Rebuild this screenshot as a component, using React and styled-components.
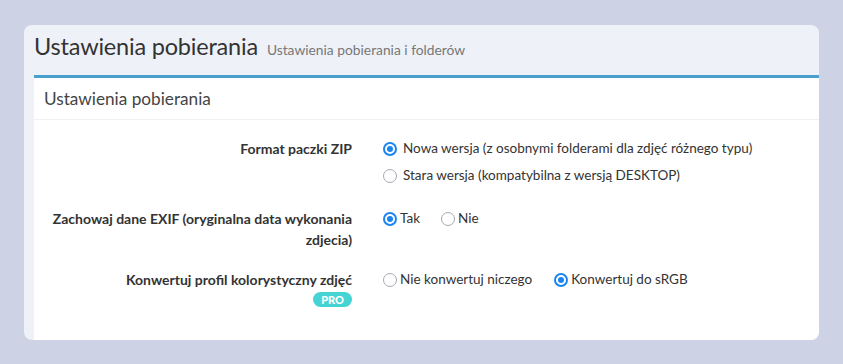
import React from "react";
import styled, { createGlobalStyle } from "styled-components";

const Global = createGlobalStyle`
  html, body { margin: 0; padding: 0; }
  body {
    background: #cdd3e5;
    font-family: "Lato", "Liberation Sans", sans-serif;
    color: #333;
  }
`;

const Page = styled.div`
  padding: 25px 24px 26px 24px;
`;

const Card = styled.div`
  background: #eef2f8;
  border-radius: 8px;
  overflow: hidden;
  padding-left: 10px;
`;

const Header = styled.div`
  display: flex;
  align-items: baseline;
  gap: 9px;
  height: 50px;
  padding-top: 7px;
  box-sizing: border-box;
`;

const Title = styled.h1`
  margin: 0;
  font-size: 23.5px;
  font-weight: 400;
  color: #333;
  letter-spacing: -0.2px;
`;

const Subtitle = styled.span`
  font-size: 13.8px;
  color: #777;
`;

const Panel = styled.div`
  background: #fff;
  border-top: 3px solid #4aa0cd;
`;

const PanelHeading = styled.div`
  height: 41px;
  display: flex;
  align-items: center;
  padding-left: 10px;
  font-size: 17.2px;
  color: #444;
  border-bottom: 1px solid #eef0f3;
`;

const Form = styled.div`
  padding: 18px 0 33px;
  display: flex;
  flex-direction: column;
  gap: 19px;
`;

const Row = styled.div`
  display: grid;
  grid-template-columns: 318px 1fr;
  column-gap: 31px;
  align-items: start;
`;

const Label = styled.div`
  text-align: right;
  font-weight: 700;
  font-size: 14px;
  line-height: 21px;
  color: #333;
  display: flex;
  flex-direction: column;
  align-items: flex-end;
`;

const Badge = styled.span`
  display: inline-block;
  margin-top: 2px;
  background: #46d3d3;
  color: #fff;
  font-size: 11px;
  font-weight: 900;
  height: 15px;
  line-height: 15px;
  padding: 0 8px;
  border-radius: 8px;
`;

const Options = styled.div`
  display: flex;
  flex-direction: ${(p) => (p.$stacked ? "column" : "row")};
  gap: ${(p) => p.$gap}px;
  margin-top: ${(p) => (p.$stacked ? -3 : 0)}px;
`;

const Option = styled.label`
  display: flex;
  align-items: center;
  gap: ${(p) => p.$gap}px;
  font-size: 13.5px;
  line-height: ${(p) => (p.$tall ? 27 : 21)}px;
  color: #333;
`;

const Radio = styled.span`
  width: 14px;
  height: 14px;
  box-sizing: border-box;
  border-radius: 50%;
  flex: none;
  border: ${(p) => (p.$on ? "2px solid #1a84f2" : "1.5px solid #a7a6b6")};
  display: flex;
  align-items: center;
  justify-content: center;
  &::after {
    content: "";
    width: 6px;
    height: 6px;
    border-radius: 50%;
    background: ${(p) => (p.$on ? "#1a84f2" : "transparent")};
  }
`;

export default function App() {
  return (
    <>
      <Global />
      <Page>
        <Card>
          <Header>
            <Title>Ustawienia pobierania</Title>
            <Subtitle>Ustawienia pobierania i folderów</Subtitle>
          </Header>
          <Panel>
            <PanelHeading>Ustawienia pobierania</PanelHeading>
            <Form>
              <Row>
                <Label>Format paczki ZIP</Label>
                <Options $stacked $gap={0}>
                  <Option $gap={6} $tall>
                    <Radio $on />
                    Nowa wersja (z osobnymi folderami dla zdjęć różnego typu)
                  </Option>
                  <Option $gap={6} $tall>
                    <Radio />
                    Stara wersja (kompatybilna z wersją DESKTOP)
                  </Option>
                </Options>
              </Row>
              <Row>
                <Label>
                  Zachowaj dane EXIF (oryginalna data wykonania
                  <br />
                  zdjecia)
                </Label>
                <Options $gap={21}>
                  <Option $gap={3}>
                    <Radio $on />
                    Tak
                  </Option>
                  <Option $gap={3}>
                    <Radio />
                    Nie
                  </Option>
                </Options>
              </Row>
              <Row>
                <Label>
                  Konwertuj profil kolorystyczny zdjęć
                  <Badge>PRO</Badge>
                </Label>
                <Options $gap={22}>
                  <Option $gap={3}>
                    <Radio />
                    Nie konwertuj niczego
                  </Option>
                  <Option $gap={3}>
                    <Radio $on />
                    Konwertuj do sRGB
                  </Option>
                </Options>
              </Row>
            </Form>
          </Panel>
        </Card>
      </Page>
    </>
  );
}
